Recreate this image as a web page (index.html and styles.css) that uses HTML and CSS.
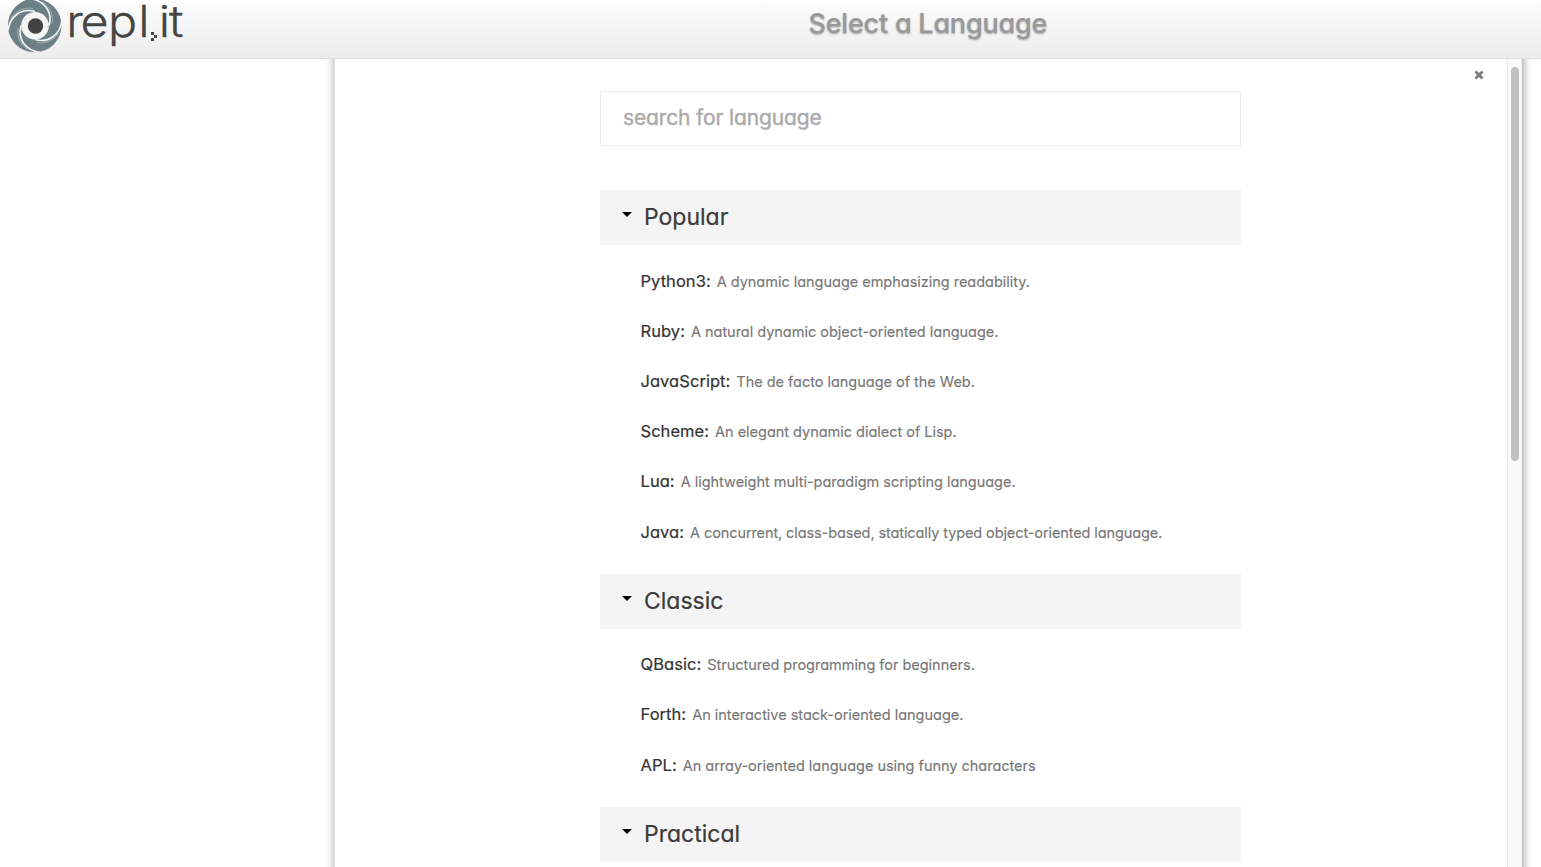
FILE: index.html
```
<!DOCTYPE html>
<html lang="en">
<head>
<meta charset="utf-8">
<title>repl.it</title>
<link rel="stylesheet" href="styles.css">
</head>
<body>
<header class="topbar">
  <svg class="logo" width="190" height="58" viewBox="0 0 190 58" role="img" aria-label="repl.it">
    <defs>
      <g id="blade">
        <path d="M-27 5C-25 -9 -14 -18 0 -14" stroke-width="1.700"/>
        <path d="M-24 -7C-20 -14 -11 -19 -2 -17" stroke-width=".7" opacity=".6"/>
      </g>
    </defs>
    <circle cx="34.700" cy="25.500" r="26.800" fill="#6b7f86"/>
    <g transform="translate(35 25.500)" fill="none" stroke="#f4f5f5">
      <use href="#blade"/><use href="#blade" transform="rotate(90)"/><use href="#blade" transform="rotate(180)"/><use href="#blade" transform="rotate(270)"/>
    </g>
    <circle cx="35" cy="25.800" r="13.800" fill="#f5f5f5"/>
    <circle cx="35.500" cy="26" r="7.700" fill="#434343"/>
    <text class="wordmark" transform="scale(1.1 1)" x="60.2 73.2 98.200 125.6" y="37">repl</text>
    <path d="M151 32h3v3h3v3h-3v3h-3v-3h3v-3h-3z" fill="#444"/>
    <text class="wordmark" transform="scale(1.1 1)" x="144.3 153.6" y="37">it</text>
  </svg>
  <h1 class="title">Select a Language</h1>
</header>
<main class="panel">
  <div class="content">
    <input class="search" type="text" placeholder="search for language">
    <section class="group">
      <h2 class="heading">Popular</h2>
      <ul class="languages">
        <li><b>Python3:</b><span>A dynamic language emphasizing readability.</span></li>
        <li><b>Ruby:</b><span>A natural dynamic object-oriented language.</span></li>
        <li><b>JavaScript:</b><span>The de facto language of the Web.</span></li>
        <li><b>Scheme:</b><span>An elegant dynamic dialect of Lisp.</span></li>
        <li><b>Lua:</b><span>A lightweight multi-paradigm scripting language.</span></li>
        <li><b>Java:</b><span class="dense">A concurrent, class-based, statically typed object-oriented language.</span></li>
      </ul>
    </section>
    <section class="group">
      <h2 class="heading">Classic</h2>
      <ul class="languages">
        <li><b>QBasic:</b><span>Structured programming for beginners.</span></li>
        <li><b>Forth:</b><span>An interactive stack-oriented language.</span></li>
        <li><b>APL:</b><span>An array-oriented language using funny characters</span></li>
      </ul>
    </section>
    <section class="group">
      <h2 class="heading">Practical</h2>
    </section>
  </div>
  <svg class="close" width="10" height="10" viewBox="0 0 10 10"><path d="M1.500 1.500l7 7M8.500 1.500l-7 7" stroke="#7c7c7c" stroke-width="2.800"/></svg>
  <div class="scrollbar"><div class="thumb"></div></div>
</main>
</body>
</html>
```
FILE: styles.css
```
* { box-sizing: border-box; }
body {
  margin: 0;
  height: 867px;
  overflow: hidden;
  background: #fff;
  font-family: Inter, "Liberation Sans", sans-serif;
  font-feature-settings: "cv11";
}
.topbar {
  display: flex;
  height: 59px;
  border-bottom: 1px solid #dfdfdf;
  background: linear-gradient(#fdfdfd, #ececec);
}
.logo { flex: none; overflow: visible; }
.wordmark { font-size: 44px; font-weight: 300; fill: #444; stroke: #444; stroke-width: .3px; }
.title {
  margin: 7px 0 0 618.5px;
  font-size: 27px;
  line-height: 34px;
  font-weight: 500;
  letter-spacing: -0.22px;
  color: #999;
  text-shadow: 0 1px 2px rgba(0, 0, 0, .35);
  white-space: nowrap;
}
.panel {
  display: flex;
  width: 1188px;
  height: 840px;
  margin-left: 334px;
  border-left: 1px solid #e0e0e0;
  box-shadow: 1px -12px 9px rgba(0, 0, 0, .42);
  clip-path: inset(0 -12px 0 -12px);
  background: #fff;
}
.content { width: 641px; margin-left: 265px; padding-top: 32px; }
.search {
  display: block;
  width: 641px;
  height: 55px;
  margin-bottom: 44px;
  padding: 0 22px 2px;
  border: 1px solid #ececec;
  background: #fff;
  font: inherit;
  font-size: 21px;
  letter-spacing: -0.14px;
}
.search::placeholder { color: #aaa; opacity: 1; -webkit-text-stroke: .4px #aaa; }
.heading {
  display: flex;
  align-items: center;
  height: 55px;
  margin: 0;
  padding: 0 0 1px 22px;
  background: #f4f4f4;
  color: #3b3b3b;
  font-size: 23px;
  font-weight: 400;
  letter-spacing: 0;
  -webkit-text-stroke: .2px;
}
.heading::before {
  content: "";
  margin: -5px 12px 0 0;
  border: 5px solid transparent;
  border-top-color: #000;
  border-bottom: 0;
}
.languages { margin: 0; padding: 10.700px 0 16.800px 40.500px; list-style: none; }
.languages li {
  display: flex;
  align-items: baseline;
  gap: 6px;
  height: 50.200px;
  line-height: 50px;
  white-space: nowrap;
}
.languages b { font-size: 16.500px; font-weight: 400; letter-spacing: 0.05px; color: #333; -webkit-text-stroke: .2px; }
.languages span { font-size: 14.500px; letter-spacing: -0.02px; color: #777; -webkit-text-stroke: .15px; }
.languages .dense { letter-spacing: -0.1px; }
.close { margin: 10.500px 0 0 233px; }
.scrollbar {
  width: 15px;
  margin-left: auto;
  padding: 8px 3px 0;
  border-left: 1px solid #e5e5e5;
  border-right: 1px solid #efefef;
  background: #fafafa;
}
.thumb { width: 8px; height: 394px; border-radius: 4px; background: #c1c1c1; }
```
